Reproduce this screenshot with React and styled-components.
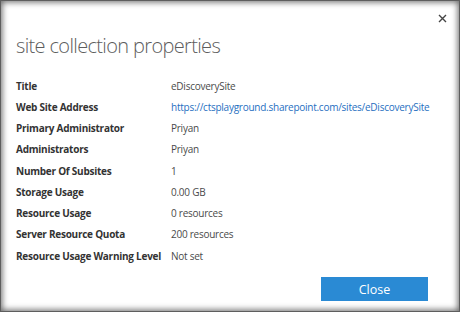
import styled, { createGlobalStyle } from 'styled-components';

const GlobalStyle = createGlobalStyle`
    html, body {
        margin: 0;
        padding: 0;
        background: #ffffff;
    }
`;

const Dialog = styled.div`
    width: 460px;
    height: 312px;
    box-sizing: border-box;
    position: relative;
    padding: 29px 14px 0 15px;
    background: #ffffff;
    border: 1px solid #5e5e5e;
    box-shadow: inset 0 0 6px 1px rgba(60, 60, 60, 0.8);
    font-family: "Open Sans", "Noto Sans", sans-serif;
    display: flex;
    flex-direction: column;
`;

const CloseX = styled.button`
    position: absolute;
    top: 10px;
    right: 10px;
    width: 14px;
    height: 14px;
    padding: 0;
    border: none;
    background: transparent;
    display: flex;
    align-items: center;
    justify-content: center;
    cursor: pointer;
`;

const Heading = styled.h1`
    margin: 0;
    font-size: 20px;
    font-weight: 300;
    color: #5d5d5d;
    line-height: 32px;
    letter-spacing: -0.65px;
`;

const PropList = styled.dl`
    margin: 13px 0 0;
    display: grid;
    grid-template-columns: 155px 1fr;
    grid-auto-rows: 21.25px;
    align-items: center;
    font-size: 10px;
    letter-spacing: -0.25px;
`;

const Label = styled.dt`
    font-weight: 700;
    color: #333333;
    white-space: nowrap;
`;

const Value = styled.dd`
    margin: 0;
    color: #4a4a4a;
    white-space: nowrap;
`;

const Link = styled.a`
    color: #1f6fbf;
    text-decoration: none;
`;

const Footer = styled.div`
    margin-top: auto;
    padding: 0 17px 10px 0;
    display: flex;
    justify-content: flex-end;
`;

const Btn = styled.button`
    width: 107px;
    height: 24px;
    border: 1px solid #2a8ad4;
    background: #2a8ad4;
    color: #ffffff;
    font-family: "Open Sans", "Noto Sans", sans-serif;
    font-size: 12.5px;
    cursor: pointer;
`;

const properties = [
    ['Title', 'eDiscoverySite'],
    ['Web Site Address', 'https://ctsplayground.sharepoint.com/sites/eDiscoverySite', true],
    ['Primary Administrator', 'Priyan'],
    ['Administrators', 'Priyan'],
    ['Number Of Subsites', '1'],
    ['Storage Usage', '0.00 GB'],
    ['Resource Usage', '0 resources'],
    ['Server Resource Quota', '200 resources'],
    ['Resource Usage Warning Level', 'Not set'],
];

export default function App() {
    return (
        <>
            <GlobalStyle />
            <Dialog>
                <CloseX aria-label="close">
                    <svg width="9" height="9" viewBox="0 0 9 9">
                        <path d="M1 1L8 8M8 1L1 8" stroke="#444" strokeWidth="1.4" />
                    </svg>
                </CloseX>
                <Heading>site collection properties</Heading>
                <PropList>
                    {properties.map(([label, value, isLink]) => (
                        <>
                            <Label key={label}>{label}</Label>
                            <Value key={label + '-v'}>
                                {isLink ? <Link href={value}>{value}</Link> : value}
                            </Value>
                        </>
                    ))}
                </PropList>
                <Footer>
                    <Btn>Close</Btn>
                </Footer>
            </Dialog>
        </>
    );
}
